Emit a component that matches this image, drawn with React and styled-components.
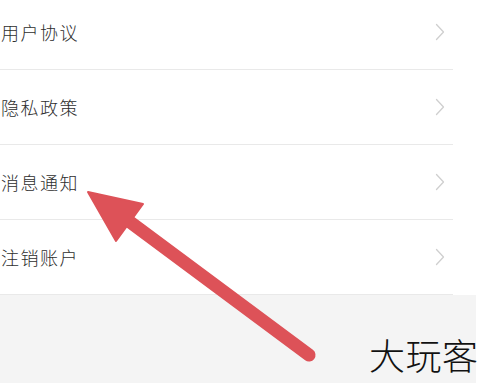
import React from "react";
import styled, { createGlobalStyle } from "styled-components";

const Global = createGlobalStyle`
  html, body { margin: 0; padding: 0; background: #ffffff; }
  body { width: 486px; height: 383px; overflow: hidden; }
  #root { width: 486px; height: 383px; }
`;

const Page = styled.div`
  position: relative;
  width: 486px;
  height: 383px;
  overflow: hidden;
  background: #ffffff;
  font-family: "Noto Sans CJK SC", "Noto Sans", sans-serif;
`;

const Column = styled.div`
  width: 476px;
  height: 100%;
  display: flex;
  flex-direction: column;
`;

const List = styled.ul`
  list-style: none;
  margin: -5px 0 0 0;
  padding: 0;
  width: 453px;
  background: #ffffff;
`;

const Row = styled.li`
  height: 74px;
  display: flex;
  align-items: center;
  justify-content: space-between;
  padding: 0 8px 0 1px;
  border-bottom: 1px solid #e9e9e9;
`;

const Label = styled.span`
  font-size: 18px;
  letter-spacing: 1.5px;
  color: #2e2e2e;
  font-weight: 300;
`;

const Chevron = styled.svg`
  width: 10px;
  height: 18px;
  flex: none;
`;

const Footer = styled.div`
  flex: 1;
  background: #f4f4f4;
`;

const ArrowLayer = styled.svg`
  position: absolute;
  left: 0;
  top: 0;
  width: 486px;
  height: 383px;
  pointer-events: none;
`;

const Watermark = styled.div`
  position: absolute;
  left: 369px;
  top: 336px;
  font-size: 36px;
  letter-spacing: 0.5px;
  line-height: 1;
  color: #111111;
  font-family: "Noto Sans CJK SC", sans-serif;
  font-weight: 300;
`;

const items = ["用户协议", "隐私政策", "消息通知", "注销账户"];

export default function App() {
  return (
    <Page>
      <Global />
      <Column>
        <List>
          {items.map((t) => (
            <Row key={t}>
              <Label>{t}</Label>
              <Chevron viewBox="0 0 10 18">
                <path d="M1.5 1.5 L8.5 9 L1.5 16.5" fill="none" stroke="#cfcfcf" strokeWidth="1.3" strokeLinecap="round" strokeLinejoin="round" />
              </Chevron>
            </Row>
          ))}
        </List>
        <Footer />
      </Column>
      <ArrowLayer viewBox="0 0 486 383">
        <line x1="126" y1="219" x2="309" y2="355" stroke="#dd5258" strokeWidth="13" strokeLinecap="round" />
        <polygon points="88,192 143,204 116,241" fill="#dd5258" stroke="#dd5258" strokeWidth="2" strokeLinejoin="round" />
      </ArrowLayer>
      <Watermark>大玩客</Watermark>
    </Page>
  );
}
